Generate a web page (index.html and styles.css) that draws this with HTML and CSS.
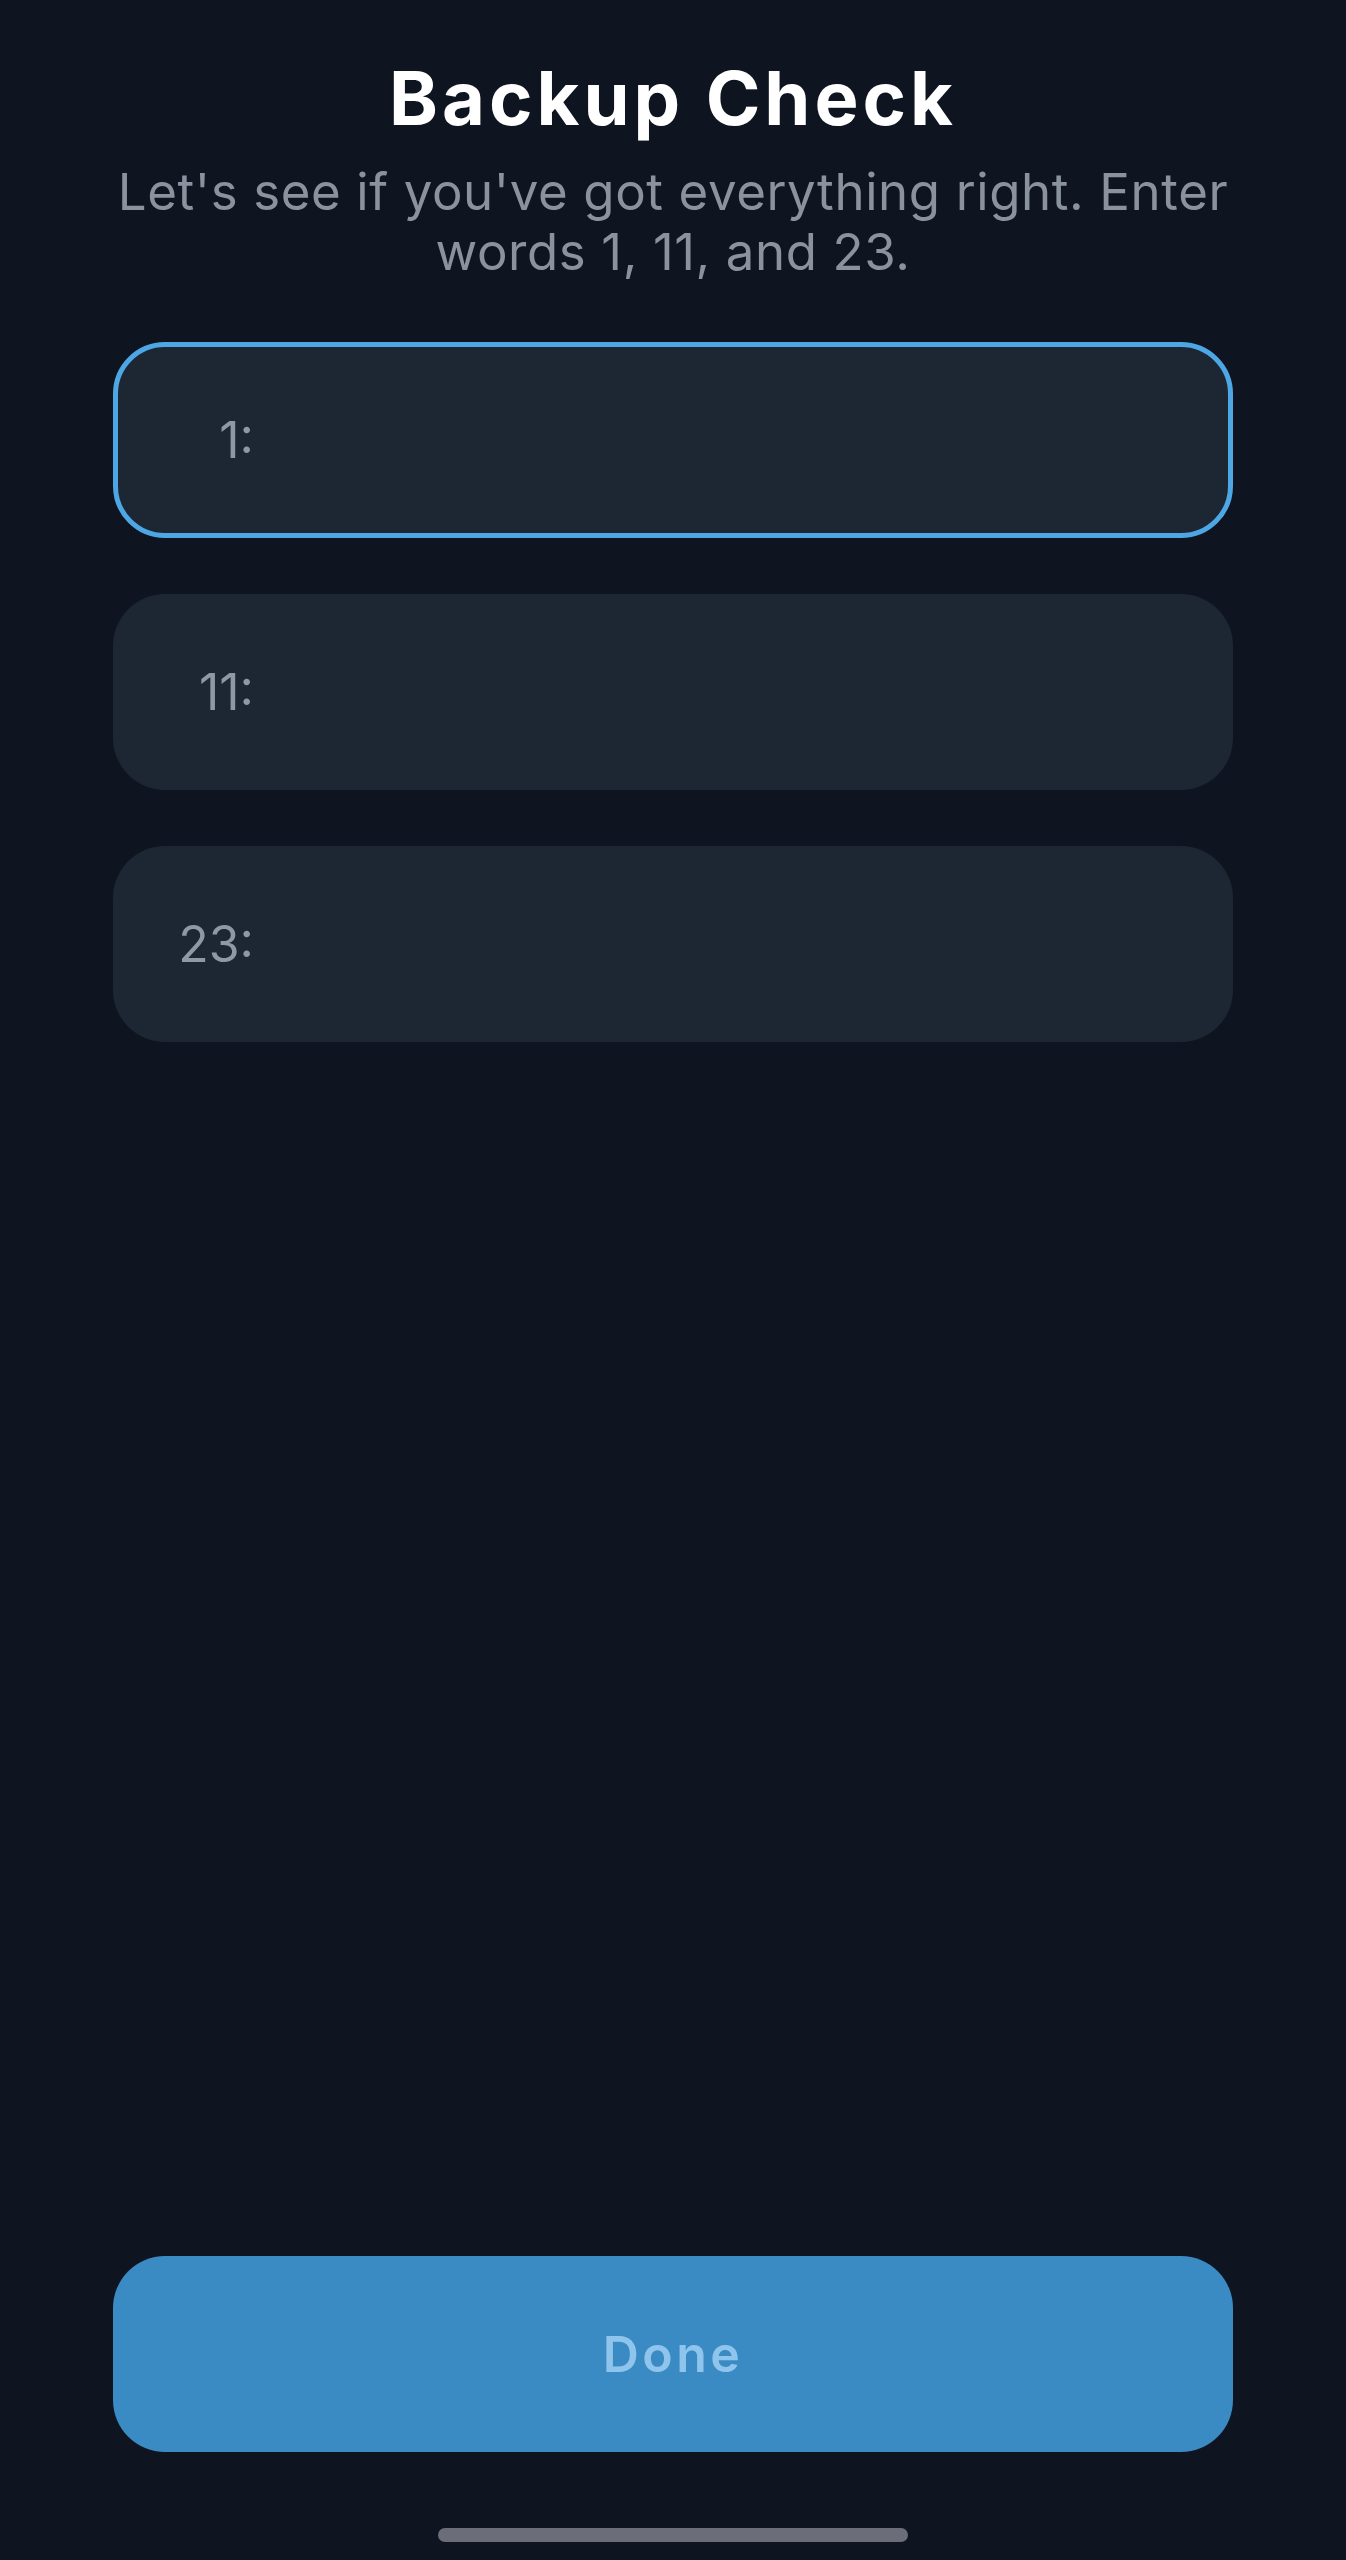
FILE: index.html
```html
<!DOCTYPE html>
<html lang="en">
<head>
<meta charset="utf-8">
<title>Backup Check</title>
<link rel="stylesheet" href="styles.css">
</head>
<body>
<main class="screen">
  <header class="intro">
    <h1 class="title">Backup Check</h1>
    <p class="subtitle">Let's see if you've got everything right. Enter words 1, 11, and 23.</p>
  </header>
  <section class="fields">
    <label class="field field-active"><span class="field-label">1:</span><input class="field-input" type="text"></label>
    <label class="field"><span class="field-label">11:</span><input class="field-input" type="text"></label>
    <label class="field"><span class="field-label">23:</span><input class="field-input" type="text"></label>
  </section>
  <button class="done" type="button">Done</button>
  <div class="home-bar"><span class="home-indicator"></span></div>
</main>
</body>
</html>
```
FILE: styles.css
```css
* { box-sizing: border-box; }
html, body { margin: 0; padding: 0; background: #0f1520; }
body { font-family: "Inter", "Liberation Sans", sans-serif; }
.screen {
  width: 1346px;
  height: 2560px;
  display: flex;
  flex-direction: column;
  padding: 54px 113px 0;
}
.intro { text-align: center; }
.title {
  margin: 0;
  font-size: 74px;
  line-height: 88px;
  font-weight: 700;
  color: #ffffff;
  letter-spacing: 4px;
}
.subtitle {
  margin: 20px -20px 0;
  font-size: 51px;
  line-height: 60px;
  font-weight: 400;
  color: #8a929e;
  letter-spacing: 0.6px;
}
.fields {
  margin-top: 60px;
  display: flex;
  flex-direction: column;
  gap: 56px;
}
.field {
  height: 196px;
  display: flex;
  align-items: center;
  background: #1d2733;
  border: 5px solid transparent;
  border-radius: 52px;
}
.field-active { border-color: #4ea7e5; }
.field-label {
  width: 136px;
  flex: none;
  text-align: right;
  font-size: 50px;
  color: #8f98a5;
}
.field-input {
  flex: 1;
  height: 100%;
  background: transparent;
  border: 0;
  outline: none;
  color: #e6e9ee;
  font: inherit;
  font-size: 50px;
  padding: 0 20px;
}
.done {
  margin-top: auto;
  height: 196px;
  border: 0;
  border-radius: 52px;
  background: #3a8ac4;
  color: #8fc4ec;
  font-family: inherit;
  font-size: 50px;
  font-weight: 600;
  letter-spacing: 3.5px;
}
.home-bar {
  height: 108px;
  display: flex;
  justify-content: center;
  padding-top: 76px;
}
.home-indicator {
  width: 470px;
  height: 14px;
  border-radius: 7px;
  background: #6b6e78;
}
```
